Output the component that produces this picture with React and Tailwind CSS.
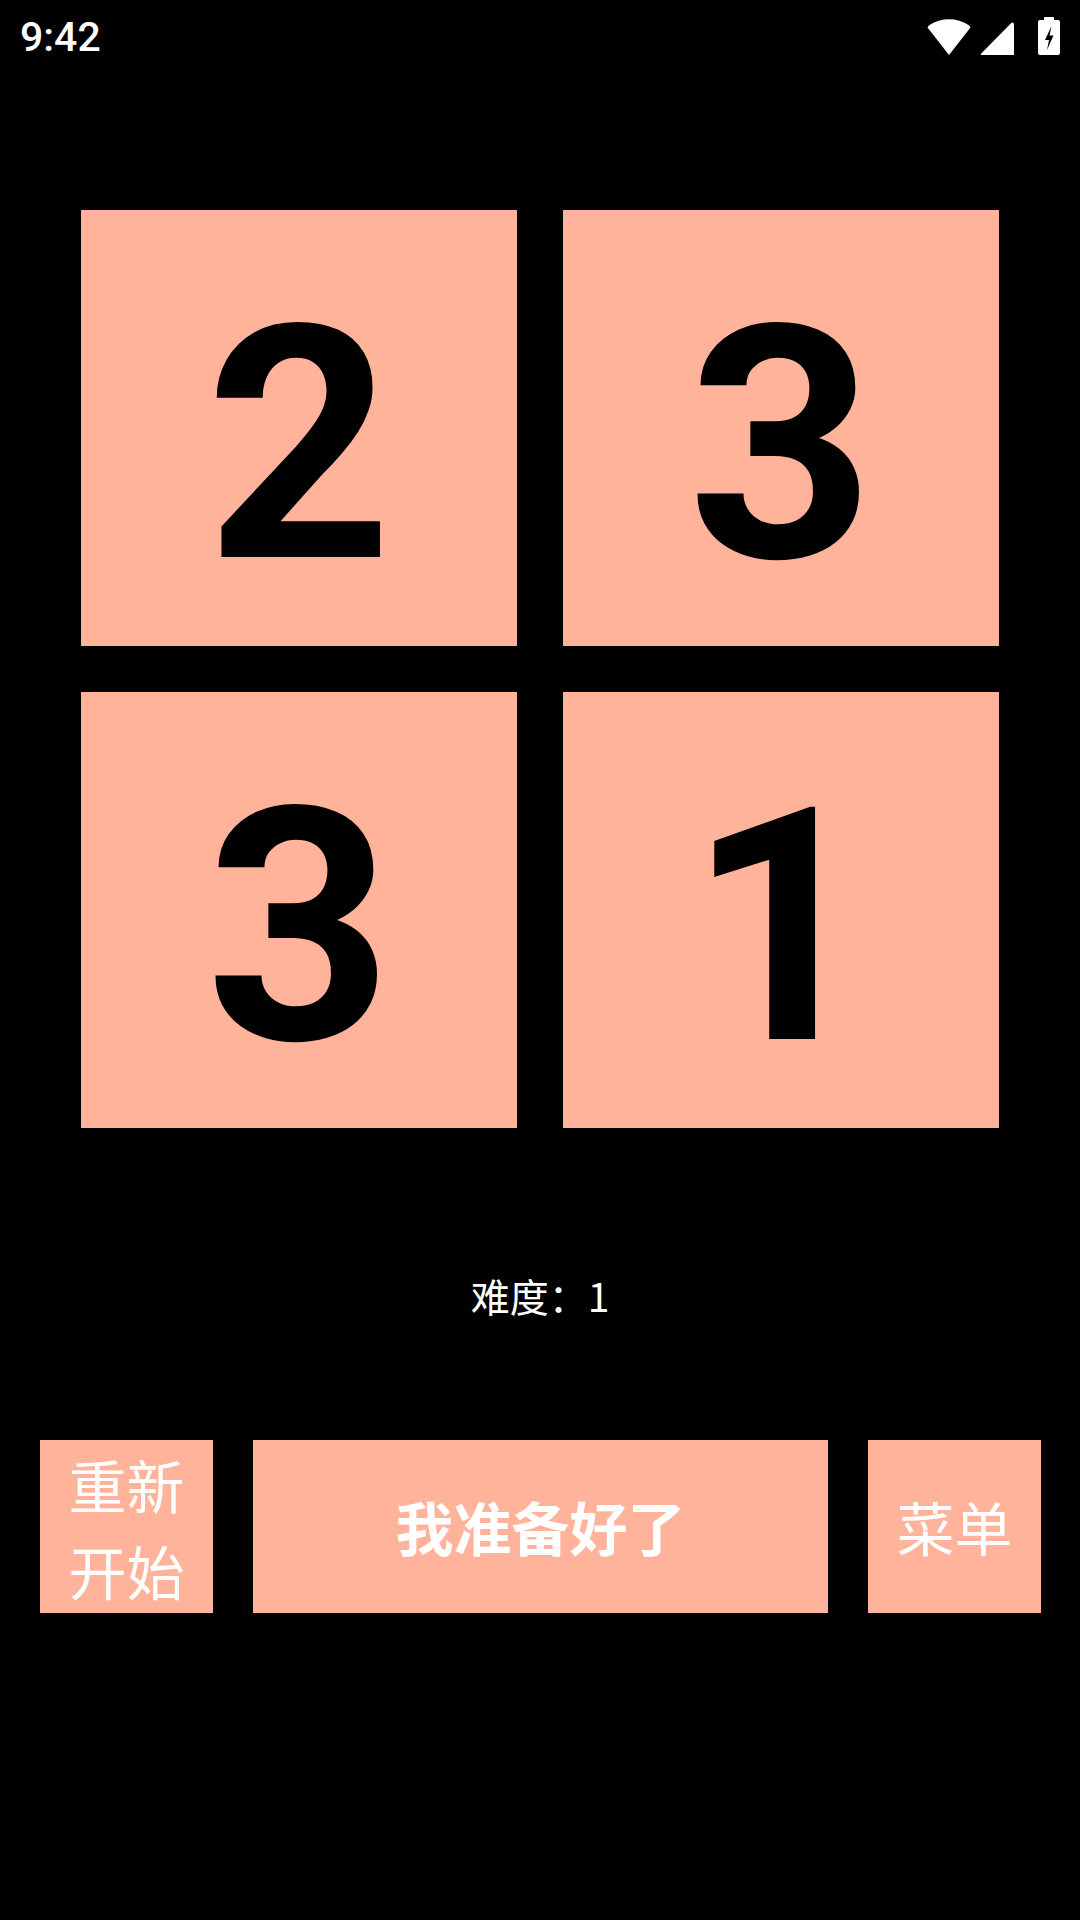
import React from 'react';

const tiles = ['2', '3', '3', '1'];

function WifiIcon() {
  return (
    <svg width="44" height="36" viewBox="0 0 44 36" className="mt-[-2px]">
      <path d="M22 36 L0.5 8.5 Q1 7 2.5 6 A36 36 0 0 1 41.5 6 Q43 7 43.5 8.5 Z" fill="white" />
    </svg>
  );
}

function SignalIcon() {
  return (
    <svg width="34" height="33" viewBox="0 0 34 33">
      <path d="M31.5 0.8 Q34 0 34 2.5 L34 33 L1.5 33 Q0 33 1 31.8 Z" fill="white" />
    </svg>
  );
}

function BatteryIcon() {
  return (
    <svg width="22" height="38" viewBox="0 0 22 38">
      <rect x="6" y="0" width="10" height="5" rx="1" fill="white" />
      <rect x="0" y="3" width="22" height="35" rx="2" fill="white" />
      <path d="M13.5 9 L7 23 L11 23 L9 33 L15.5 18.5 L11.5 18.5 L13.5 9 Z" fill="black" />
    </svg>
  );
}

export default function App() {
  return (
    <div className="h-[1920px] w-[1080px] bg-black text-white overflow-hidden" style={{ fontFamily: 'Roboto, "Noto Sans CJK SC", sans-serif' }}>
      {/* status bar */}
      <div className="h-[74px] pl-[20px] pr-[20px] flex items-center justify-between">
        <span className="text-[41px] leading-[41px] font-medium">9:42</span>
        <div className="flex items-end gap-[9px] mt-[-3px]">
          <WifiIcon />
          <SignalIcon />
          <div className="ml-[15px]">
            <BatteryIcon />
          </div>
        </div>
      </div>

      {/* number grid */}
      <div className="mt-[136px] px-[81px] grid grid-cols-2 gap-[46px]">
        {tiles.map((n, i) => (
          <div key={i} className="h-[436px] bg-[#ffb39b] flex justify-center items-start">
            <span className="mt-[73px] text-[326px] leading-none font-bold text-black" style={{ fontFamily: 'Roboto, sans-serif' }}>
              {n}
            </span>
          </div>
        ))}
      </div>

      {/* difficulty */}
      <div className="mt-[140px] text-center text-[39px] leading-[55px]" style={{ fontFamily: '"Noto Sans CJK SC", sans-serif' }}>
        难度：1
      </div>

      {/* buttons */}
      <div className="mt-[117px] pl-[40px] pr-[39px] flex gap-[40px]" style={{ fontFamily: '"Noto Sans CJK SC", sans-serif' }}>
        <button className="w-[173px] h-[173px] bg-[#ffb39b] text-white text-[58px] leading-[86px] flex flex-col items-center justify-center">
          <span>重新</span>
          <span>开始</span>
        </button>
        <button className="flex-1 h-[173px] bg-[#ffb39b] text-white text-[58px] font-bold flex items-center justify-center">
          我准备好了
        </button>
        <button className="w-[173px] h-[173px] bg-[#ffb39b] text-white text-[58px] flex items-center justify-center">
          菜单
        </button>
      </div>
    </div>
  );
}
